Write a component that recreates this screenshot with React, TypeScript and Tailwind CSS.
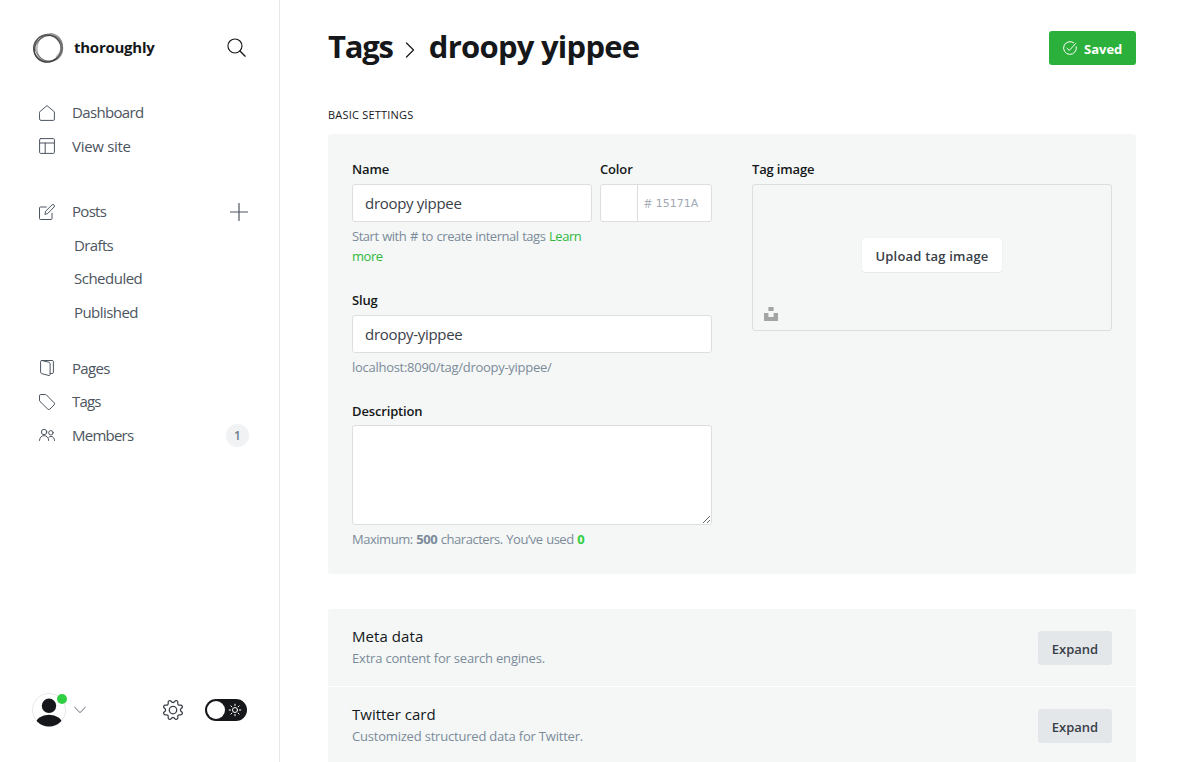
import type { ReactNode } from "react";

type IconProps = { children: ReactNode; box?: string; className?: string };

function Icon({ children, box = "0 0 16 16", className = "size-4" }: IconProps) {
  return (
    <svg viewBox={box} className={`shrink-0 ${className}`} fill="none" stroke="currentColor" strokeLinecap="round" strokeLinejoin="round">
      {children}
    </svg>
  );
}

function NavItem({ icon, label, track, action }: { icon: ReactNode; label: string; track: string; action?: ReactNode }) {
  return (
    <li className="flex h-[33.5px] items-center">
      {icon}
      <span className={`ml-[17px] flex-1 pb-px ${track}`}>{label}</span>
      {action}
    </li>
  );
}

function SubItem({ label, track }: { label: string; track: string }) {
  return (
    <li className="flex h-[33.5px] items-center pl-[35px]">
      <span className={`pb-px ${track}`}>{label}</span>
    </li>
  );
}

function Logo() {
  return (
    <svg viewBox="0 0 32 32" className="size-8 shrink-0" fill="none">
      <ellipse cx="15.4" cy="16.4" rx="13.7" ry="13.4" stroke="#555" strokeWidth="1.5" />
      <ellipse cx="16.6" cy="15.4" rx="14.1" ry="13.100" stroke="#555" strokeOpacity=".7" strokeWidth="1.1" transform="rotate(35 16 16)" />
      <ellipse cx="17.4" cy="15" rx="12.600" ry="13.9" stroke="#666" strokeOpacity=".6" strokeWidth="1.2" transform="rotate(20 16 16)" />
      <ellipse cx="15.6" cy="16.8" rx="14.4" ry="12.600" stroke="#333" strokeOpacity=".75" strokeWidth="1" transform="rotate(-38 16 16)" />
      <path d="M18 1.900c7 .8 11.500 5.500 11.700 12.200-.2 5-2 8.500-5.500 11.200" stroke="#888" strokeOpacity=".55" strokeWidth="2.200" />
    </svg>
  );
}

function Sidebar() {
  return (
    <aside className="flex w-[280px] shrink-0 flex-col border-r border-[#e5e7e9] text-[15px] text-[#4c5560]">
      <header className="flex items-center pt-8 pr-[33px] pl-8 text-[#15171a]">
        <Logo />
        <span className="ml-[10px] flex-1 pb-0.5 text-[15px] leading-[30px] font-bold tracking-[-0.25px]">thoroughly</span>
        <Icon className="mb-px size-[19px]">
          <circle cx="6.700" cy="6.700" r="5.900" strokeWidth=".95" />
          <path d="M10.900 10.900l4.400 4.400" strokeWidth="1.100" />
        </Icon>
      </header>

      <nav className="pt-8 pr-[30px] pl-[39px]">
        <ul>
          <NavItem
            label="Dashboard"
            track="tracking-[-0.66px]"
            icon={
              <Icon>
                <path d="M.6 6.900L8 .6l7.400 6.300v7.300a1.200 1.200 0 01-1.200 1.200H1.800A1.200 1.200 0 01.6 14.200z" />
              </Icon>
            }
          />
          <NavItem
            label="View site"
            track="tracking-[-0.3px]"
            icon={
              <Icon>
                <rect x=".6" y=".6" width="14.800" height="14.800" rx="1" />
                <path d="M.6 5h14.800M6.200 5v10.400" />
              </Icon>
            }
          />
        </ul>
        <ul className="mt-8">
          <NavItem
            label="Posts"
            track="tracking-[-0.7px]"
            icon={
              <Icon>
                <path d="M7.300 3H1.500a1 1 0 00-1 1v10.500a1 1 0 001 1H12a1 1 0 001-1V9.200" />
                <path d="M6 10l.7-2.900L13 .9a1.350 1.350 0 011.900 0l.2.2a1.350 1.350 0 010 1.900L8.900 9.300z" />
              </Icon>
            }
            action={
              <Icon box="0 0 18 18" className="mr-px size-[18px]">
                <path d="M9 .5v17M.5 9h17" strokeWidth="1.200" />
              </Icon>
            }
          />
          <SubItem label="Drafts" track="tracking-[-0.63px]" />
          <SubItem label="Scheduled" track="tracking-[-0.5px]" />
          <SubItem label="Published" track="tracking-[-0.55px]" />
        </ul>
        <ul className="mt-[22.6px]">
          <NavItem
            label="Pages"
            track="tracking-[-0.7px]"
            icon={
              <Icon>
                <path d="M2.300.5h10.900a1.200 1.200 0 011.200 1.200v10.600a1.200 1.200 0 01-1.200 1.200h-2" />
                <path d="M1.600 1.400c0-.6.5-1 1.100-.9l7.200 1.700c.7.200 1.200.8 1.200 1.500v10.900c0 .6-.5 1-1.100.9l-7.400-1.900c-.6-.2-1-.7-1-1.300z" />
              </Icon>
            }
          />
          <NavItem
            label="Tags"
            track="tracking-[-0.8px]"
            icon={
              <Icon>
                <path d="M.5 1.700A1.200 1.200 0 011.700.5h4.700c.4 0 .8.2 1.100.5l7.600 7.800a1.500 1.500 0 010 2.100l-4.200 4.200a1.500 1.500 0 01-2.100 0L1 7.500C.7 7.200.5 6.800.5 6.400z" />
              </Icon>
            }
          />
          <NavItem
            label="Members"
            track="tracking-[-0.76px]"
            icon={
              <Icon>
                <circle cx="5.100" cy="5" r="2.700" />
                <circle cx="11.900" cy="5.800" r="2.200" />
                <path d="M.5 13.500c0-2.800 2-4.900 4.600-4.900s4.600 2.100 4.600 4.900M9.900 10.300c.6-.6 1.300-.9 2.100-.9 2 0 3.500 1.800 3.500 4.100" />
              </Icon>
            }
            action={
              <span className="flex size-[23px] items-center justify-center rounded-full bg-[#f0f2f4] pt-px text-xs font-semibold text-[#6f7d8a]">1</span>
            }
          />
        </ul>
      </nav>

      <footer className="mt-auto flex items-center pr-8 pb-[35px] pl-8">
        <div className="relative size-[34px]">
          <svg viewBox="0 0 34 34" className="size-[34px]">
            <defs>
              <clipPath id="avatar">
                <circle cx="17" cy="17" r="16.500" />
              </clipPath>
            </defs>
            <circle cx="17" cy="17" r="16.500" fill="#fff" stroke="#e5e7ea" />
            <circle cx="17" cy="12.800" r="7.200" fill="#15171a" />
            <ellipse cx="17" cy="31.500" rx="13.500" ry="9.800" fill="#15171a" clipPath="url(#avatar)" />
          </svg>
          <span className="absolute top-px left-[25px] size-[10px] rounded-full bg-[#30cf43]" />
        </div>
        <Icon box="0 0 12 8" className="ml-2 h-2 w-3 text-[#5d6670]">
          <path d="M.7 1.200L6 6.700l5.300-5.500" />
        </Icon>
        <Icon box="0 0 24 24" className="mr-[22px] ml-auto size-5 text-[#394047]">
          <path
            strokeWidth="1.500"
            d="M10.546 2.438a1.957 1.957 0 002.908 0L14.400 1.400a1.959 1.959 0 013.410 1.413l-.071 1.400A1.958 1.958 0 0019.790 6.270l1.400-.071A1.959 1.959 0 0122.600 9.600l-1.041.94a1.960 1.960 0 000 2.909l1.041.94a1.959 1.959 0 01-1.413 3.410l-1.400-.071a1.958 1.958 0 00-2.056 2.056l.071 1.400A1.959 1.959 0 0114.400 22.600l-.941-1.041a1.959 1.959 0 00-2.908 0L9.606 22.600A1.959 1.959 0 016.200 21.192l.072-1.400a1.958 1.958 0 00-2.056-2.056l-1.400.071A1.958 1.958 0 011.400 14.400l1.041-.94a1.960 1.960 0 000-2.909L1.400 9.606A1.958 1.958 0 012.808 6.200l1.400.071a1.958 1.958 0 002.058-2.060L6.200 2.810A1.959 1.959 0 019.606 1.400z"
          />
          <circle cx="12" cy="12" r="4.500" strokeWidth="1.500" />
        </Icon>
        <div className="flex h-[22px] w-[42px] items-center justify-between rounded-full bg-[#15171a] pr-[5px] pl-[2px]">
          <span className="size-[18px] rounded-full bg-white" />
          <Icon box="0 0 14 14" className="size-[14px] text-white">
            <circle cx="7" cy="7" r="2.500" />
            <path d="M7 1.200v1.400M7 11.400v1.400M1.200 7h1.400M11.400 7h1.400M2.900 2.900l1 1M10.100 10.100l1 1M2.900 11.100l1-1M10.100 3.900l1-1" />
          </Icon>
        </div>
      </footer>
    </aside>
  );
}

const fieldClass = "block w-full rounded-[3px] border border-[#dddfdf] bg-white text-[15px] text-[#394047] outline-none";
const labelClass = "block h-[18px] text-[13px] leading-[18px] font-semibold tracking-[-0.15px] text-[#15171a]";
const helpClass = "text-[13px] leading-5 text-[#7c8b9a]";

function ExpandRow({ title, note, titleTrack }: { title: string; note: string; titleTrack: string }) {
  return (
    <div className="flex h-[78px] items-start justify-between px-6 pt-[15px]">
      <div className="pt-px">
        <h4 className={`text-[15px] leading-[22px] font-medium text-[#15171a] ${titleTrack}`}>{title}</h4>
        <p className="mt-px text-[13px] leading-[21px] tracking-[-0.2px] text-[#7c8b9a]">{note}</p>
      </div>
      <button className="mt-[7px] h-[34px] w-[74px] rounded-[3px] bg-[#e3e7ea] pt-[3px] text-[13px] font-semibold text-[#394047]">Expand</button>
    </div>
  );
}

export default function App() {
  return (
    <div className="flex h-[762px] overflow-hidden bg-white font-['Open_Sans','Noto_Sans',sans-serif]">
      <Sidebar />
      <main className="flex-1 px-12">
        <header className="flex items-center justify-between pt-[30px]">
          <h2 className="flex h-9 items-center text-[31px] leading-9 font-bold text-[#15171a]">
            <span className="pb-1 tracking-[-1.2px]">Tags</span>
            <Icon box="0 0 10 16" className="mt-1 mr-[14px] ml-3 h-4 w-[10px]">
              <path d="M1.500 1l7 7-7 7" strokeWidth="1.200" />
            </Icon>
            <span className="pb-1 tracking-[-0.75px]">droopy yippee</span>
          </h2>
          <button className="flex h-[34px] w-[87px] items-center rounded-[3px] bg-[#2bb13b] pl-[14px] text-[13px] font-bold text-white">
            <Icon box="0 0 14 14" className="mr-[7px] size-[14px]">
              <path d="M13.300 5.800A6.400 6.400 0 1110.600 1.700M4 7.200l2.300 2.200 6.400-6.900" />
            </Icon>
            <span className="pt-[3px]">Saved</span>
          </button>
        </header>

        <h4 className="mt-10 h-[18px] text-[11px] leading-[18px] tracking-[0.2px] text-[#15171a] uppercase">Basic settings</h4>

        <section className="mt-[10px] flex h-[440px] gap-10 rounded-[3px] bg-[#f4f7f6] px-6 pt-[26px]">
          <div className="w-[360px]">
            <div className="flex gap-2">
              <div className="w-60">
                <label className={labelClass}>Name</label>
                <input className={`${fieldClass} mt-[6px] h-[38px] px-3 tracking-[-0.3px]`} defaultValue="droopy yippee" />
                <p className={`${helpClass} mt-1 mb-px tracking-[-0.47px] [word-spacing:0.7px]`}>
                  Start with # to create internal tags <a className="text-[#30b93e]">Learn<br />more</a>
                </p>
              </div>
              <div className="w-28">
                <label className={labelClass}>Color</label>
                <div className="mt-[6px] flex h-[38px] rounded-[3px] border border-[#dddfdf] bg-white">
                  <span className="w-[37px] border-r border-[#dddfdf]" />
                  <span className="flex items-center pt-px pl-[6px] text-xs text-[#a5adb8]">#</span>
                  <input className="w-14 pt-0.5 pl-1 font-['DejaVu_Sans'] text-[11px] text-[#a0a8b3] outline-none" defaultValue="15171A" />
                </div>
              </div>
            </div>
            <label className={`${labelClass} mt-6`}>Slug</label>
            <input className={`${fieldClass} mt-[6px] h-[38px] px-3 tracking-[-0.3px]`} defaultValue="droopy-yippee" />
            <p className={`${helpClass} mt-1 tracking-[-0.28px]`}>localhost:8090/tag/droopy-yippee/</p>
            <label className={`${labelClass} mt-[25px]`}>Description</label>
            <textarea className={`${fieldClass} mt-[5px] h-[100px] resize`} />
            <p className={`${helpClass} mt-1 tracking-[-0.47px] [word-spacing:0.7px]`}>
              Maximum: <b>500</b> characters. You’ve used <b className="text-[#30cf43]">0</b>
            </p>
          </div>
          <div className="w-[360px]">
            <label className={labelClass}>Tag image</label>
            <div className="relative mt-[6px] flex h-[147px] items-center justify-center rounded-[3px] border border-[#dddfdf]">
              <button className="mt-[-5px] h-[34px] w-[140px] rounded-[3px] bg-white pt-[3px] text-[13px] font-semibold tracking-[0.2px] text-[#394047] shadow-[0_0_1px_rgba(0,0,0,0.15),0_1px_1px_rgba(0,0,0,0.05)]">
                Upload tag image
              </button>
              <svg viewBox="0 0 14 14" className="absolute bottom-[9px] left-[11px] size-[14px]" fill="#a3a5a5">
                <path d="M4.400 0h5.200v4H4.400zM0 6h4.400v4h5.200V6H14v8H0z" />
              </svg>
            </div>
          </div>
        </section>

        <section className="mt-[35px] divide-y divide-white rounded-t-[3px] bg-[#f4f7f6]">
          <ExpandRow title="Meta data" titleTrack="tracking-[0.07px]" note="Extra content for search engines." />
          <ExpandRow title="Twitter card" titleTrack="tracking-normal" note="Customized structured data for Twitter." />
        </section>
      </main>
    </div>
  );
}
